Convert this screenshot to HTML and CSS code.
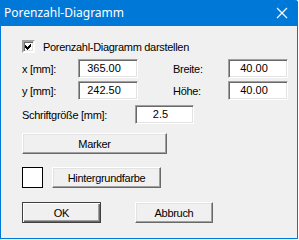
FILE: index.html
```html
<!DOCTYPE html>
<html lang="de">
<head>
<meta charset="UTF-8">
<title>Porenzahl-Diagramm</title>
<link rel="stylesheet" href="styles.css">
</head>
<body>
<div class="window">
    <div class="titlebar">
        <span class="title">Porenzahl-Diagramm</span>
        <svg class="close" width="12" height="12" viewBox="0 0 12 12">
            <path d="M1 1 L11 11 M11 1 L1 11" stroke="#fff" stroke-width="1.2" fill="none"/>
        </svg>
    </div>
    <div class="content">
        <div class="check-row">
            <span class="checkbox">
                <svg width="9" height="9" viewBox="0 0 9 9" shape-rendering="crispEdges">
                    <polygon points="1,3 3,5 7,1 7,4 3,8 1,6" fill="#000"/>
                </svg>
            </span>
            <span class="label">Porenzahl-Diagramm darstellen</span>
        </div>
        <div class="field-row first">
            <span class="label short">x [mm]:</span>
            <div class="edit">365.00</div>
            <span class="label side">Breite:</span>
            <div class="edit">40.00</div>
        </div>
        <div class="field-row">
            <span class="label short">y [mm]:</span>
            <div class="edit">242.50</div>
            <span class="label side">Höhe:</span>
            <div class="edit">40.00</div>
        </div>
        <div class="field-row font-row">
            <span class="label long">Schriftgröße [mm]:</span>
            <div class="edit narrow">2.5</div>
        </div>
        <button class="btn marker">Marker</button>
        <div class="color-row">
            <span class="swatch"></span>
            <button class="btn bg">Hintergrundfarbe</button>
        </div>
        <div class="action-row">
            <button class="btn ok">OK</button>
            <button class="btn cancel">Abbruch</button>
        </div>
    </div>
</div>
</body>
</html>
```

FILE: styles.css
```css
body {
    margin: 0;
    background-color: #fff;
    font-family: "Liberation Sans", Arial, sans-serif;
    font-size: 11px;
    color: #000;
}
.window {
    width: 296px;
    height: 238px;
    border: 1px solid #0078d7;
    border-top: none;
    border-top-right-radius: 3px;
    background-color: #f0f0f0;
    display: flex;
    flex-direction: column;
}
.titlebar {
    height: 26px;
    background-color: #0078d7;
    display: flex;
    align-items: center;
    justify-content: space-between;
    padding: 0 10px 0 4px;
    margin: 0 -1px;
    border-top-right-radius: 3px;
}
.title {
    color: #fff;
    font-family: "Noto Sans", sans-serif;
    font-size: 12px;
    margin-top: -1px;
}
.close {
    display: block;
}
.content {
    padding: 14px 0 0 21px;
    display: flex;
    flex-direction: column;
}
.label {
    letter-spacing: -0.3px;
    white-space: nowrap;
}
.check-row {
    display: flex;
    align-items: center;
    height: 13px;
}
.checkbox {
    width: 9px;
    height: 9px;
    background-color: #fff;
    border: 2px solid;
    border-color: #a0a0a0 #fff #fff #a0a0a0;
    box-shadow: inset 1px 1px #696969, inset -1px -1px #e3e3e3;
    margin-right: 8px;
    display: flex;
}
.checkbox svg {
    display: block;
}
.field-row {
    display: flex;
    align-items: center;
    margin-top: 3px;
}
.field-row.first {
    margin-top: 6px;
}
.field-row.font-row {
    margin-top: 5px;
}
.short {
    width: 56px;
}
.side {
    width: 55px;
    margin-left: 35px;
}
.long {
    width: 113px;
}
.edit {
    box-sizing: border-box;
    width: 60px;
    height: 19px;
    background-color: #fff;
    border: 1px solid;
    border-color: #a0a0a0 #fff #fff #a0a0a0;
    box-shadow: inset 1px 1px #696969, inset -1px -1px #e3e3e3;
    text-align: center;
    padding-right: 8px;
    line-height: 17px;
}
.edit.narrow {
    width: 59px;
}
.btn {
    box-sizing: border-box;
    height: 21px;
    padding: 0;
    font-family: "Liberation Sans", Arial, sans-serif;
    font-size: 11px;
    letter-spacing: -0.3px;
    color: #000;
    background-color: #f0f0f0;
    border: 1px solid;
    border-color: #fff #696969 #696969 #fff;
    box-shadow: inset -1px -1px #a0a0a0, inset 1px 1px #e3e3e3;
}
.marker {
    width: 145px;
    margin-top: 9px;
}
.color-row {
    display: flex;
    align-items: center;
    margin-top: 13px;
}
.swatch {
    box-sizing: border-box;
    width: 21px;
    height: 21px;
    background-color: #fff;
    border: 1px solid #000;
    margin-right: 9px;
}
.bg {
    width: 109px;
}
.action-row {
    display: flex;
    gap: 34px;
    margin-top: 14px;
}
.ok {
    width: 79px;
    border: 1px solid #404040;
    box-shadow: inset 1px 1px #fff, inset -1px -1px #696969, inset -2px -2px #a0a0a0;
}
.cancel {
    width: 78px;
}
```
